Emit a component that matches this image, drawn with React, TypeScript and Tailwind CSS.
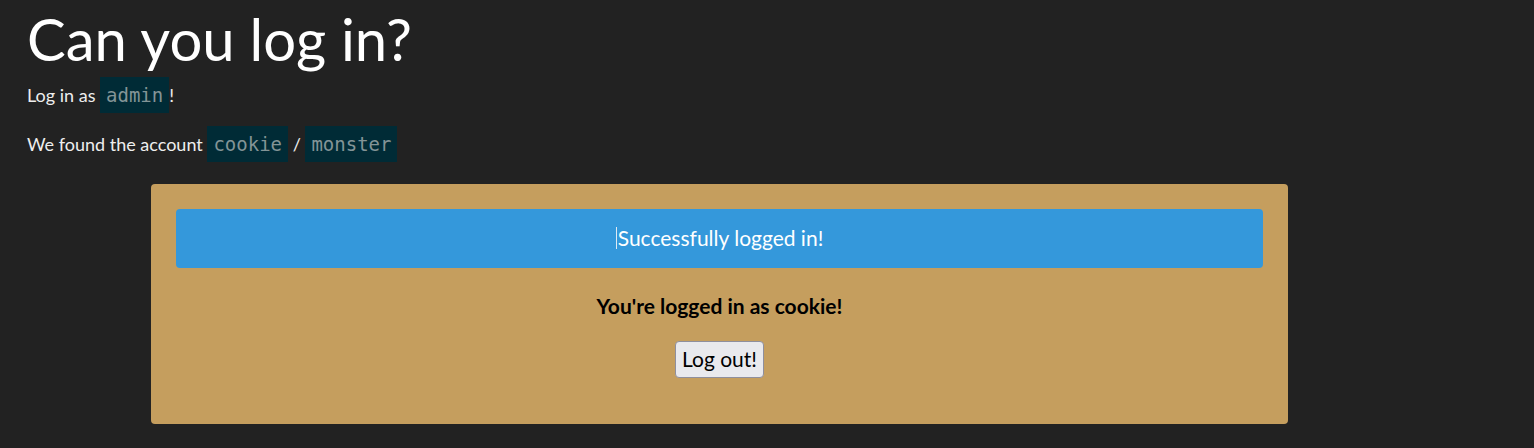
export default function App() {
  return (
    <main
      className="min-h-screen bg-[#222222] text-[#eeeeee] px-[27px] pt-[4px]"
      style={{ fontFamily: "Lato, 'Open Sans', sans-serif" }}
    >
      <h1 className="text-[58px] leading-[1.2] font-normal text-white">Can you log in?</h1>

      <p className="mt-[4px] text-[18px] leading-[34px]">
        Log in as{" "}
        <code className="bg-[#002b36] text-[#839496] px-[6px] py-[7px] text-[19px] font-['DejaVu_Sans_Mono',monospace]">
          admin
        </code>
        !
      </p>

      <p className="mt-[15px] text-[18px] leading-[34px]">
        We found the account{" "}
        <code className="bg-[#002b36] text-[#839496] px-[6px] py-[7px] text-[19px] font-['DejaVu_Sans_Mono',monospace]">
          cookie
        </code>{" "}
        /{" "}
        <code className="bg-[#002b36] text-[#839496] px-[6px] py-[7px] text-[19px] font-['DejaVu_Sans_Mono',monospace]">
          monster
        </code>
      </p>

      {/* Login panel */}
      <section className="mt-[23px] ml-[124px] w-[1137px] bg-[#c59e5e] rounded-[4px] px-[25px] pt-[25px] pb-[46px]">
        <div className="h-[59px] bg-[#3498db] rounded-[4px] flex items-center justify-center text-white text-[21px]">
          <span className="inline-block w-px h-[22px] bg-[#dfe9f2] mr-[1px]" />
          Successfully logged in!
        </div>

        <p className="mt-[23px] text-center text-[21px] font-bold text-black leading-[29px]">
          You're logged in as cookie!
        </p>

        <div className="mt-[21px] flex justify-center">
          <button className="h-[37px] px-[6px] bg-[#e9e9ed] border border-[#8f8f9d] rounded-[4px] text-[21px] text-black">
            Log out!
          </button>
        </div>
      </section>
    </main>
  )
}
